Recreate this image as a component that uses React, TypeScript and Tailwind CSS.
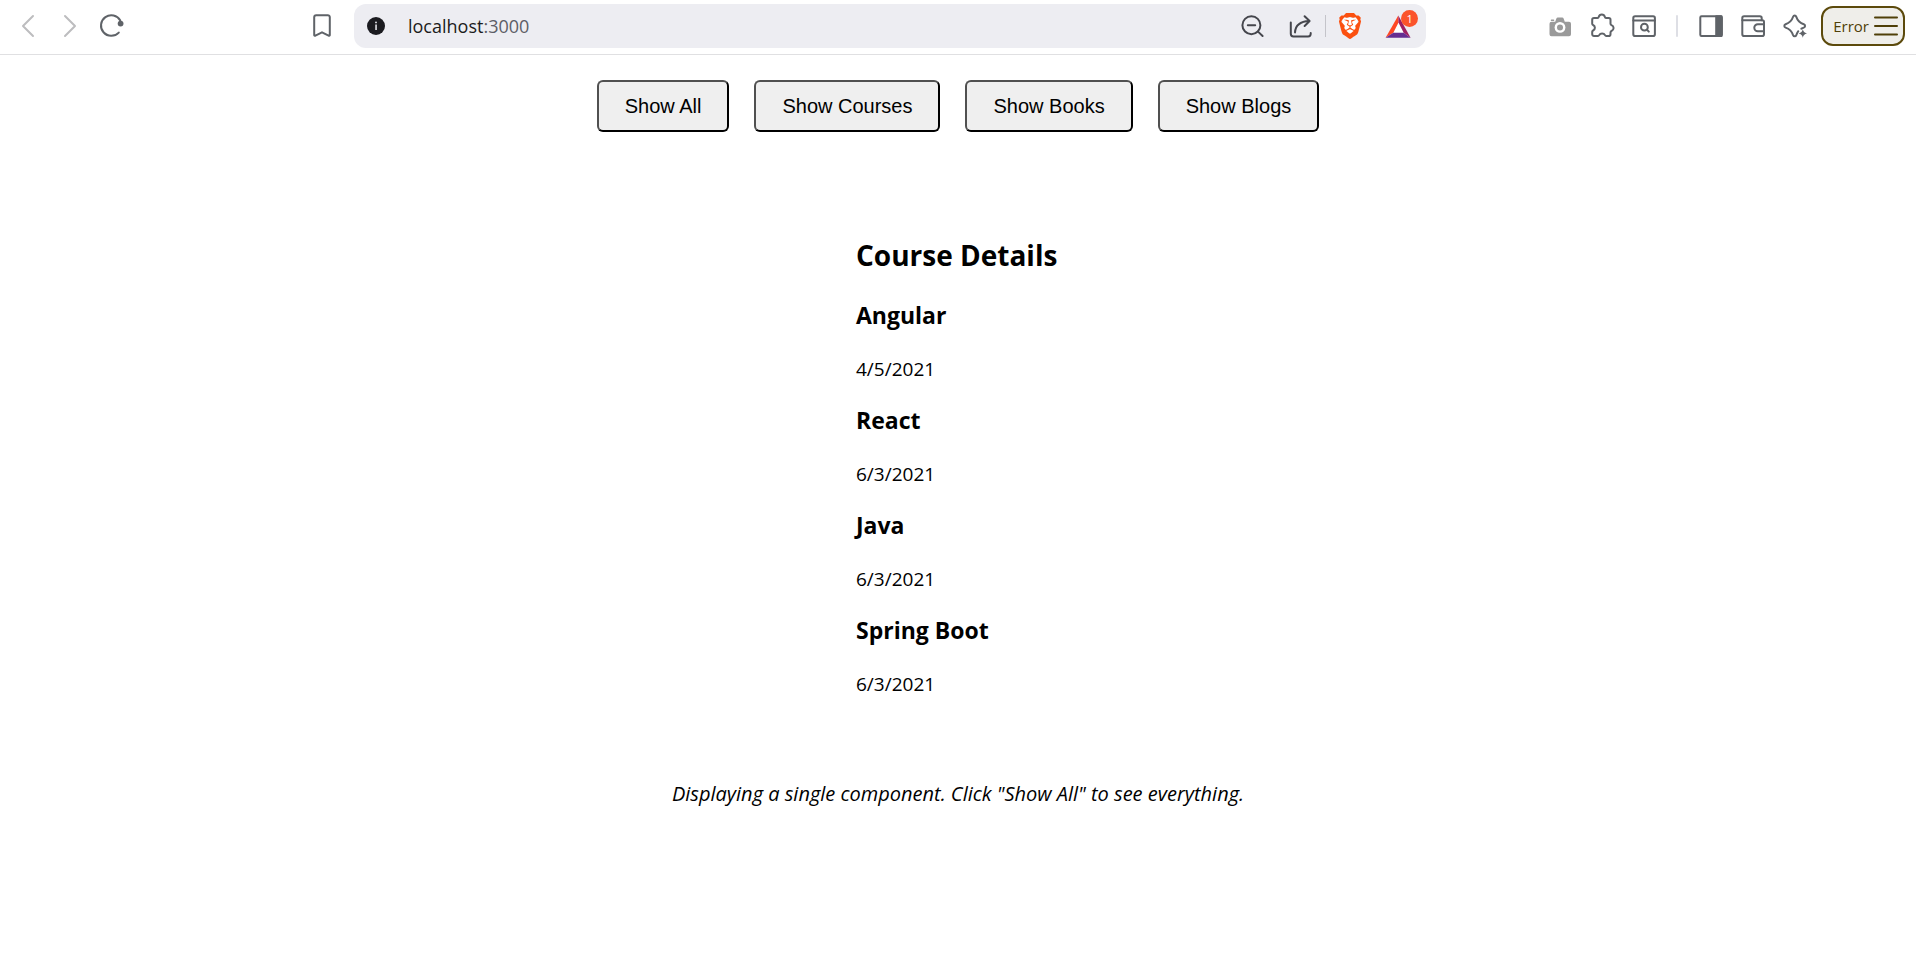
import { useState, type ReactNode } from "react";
import { SiBrave } from "react-icons/si";

const courses = [
  { name: "Angular", date: "4/5/2021" },
  { name: "React", date: "6/3/2021" },
  { name: "Java", date: "6/3/2021" },
  { name: "Spring Boot", date: "6/3/2021" },
];

const views = ["Show All", "Show Courses", "Show Books", "Show Blogs"];

function Glyph({ children, width = 2 }: { children: ReactNode; width?: number }) {
  return (
    <svg
      className="h-[26px] w-[26px] shrink-0"
      viewBox="0 0 26 26"
      fill="none"
      stroke="currentColor"
      strokeWidth={width}
      strokeLinecap="round"
      strokeLinejoin="round"
      aria-hidden="true"
    >
      {children}
    </svg>
  );
}

function ToolButton({ label, children }: { label: string; children: ReactNode }) {
  return (
    <button type="button" aria-label={label} className="flex h-11 w-[42px] shrink-0 items-center justify-center">
      {children}
    </button>
  );
}

function BarButton({ label, children }: { label: string; children: ReactNode }) {
  return (
    <button type="button" aria-label={label} className="relative flex h-11 w-12 shrink-0 items-center justify-center">
      {children}
    </button>
  );
}

function AddressBar() {
  return (
    <div className="ml-[11px] flex h-11 min-w-0 flex-1 items-center rounded-xl bg-[#ededf2] pr-1 pl-[13px] text-[#45464d]">
      <button type="button" aria-label="Site information" className="shrink-0">
        <svg className="h-[18px] w-[18px]" viewBox="0 0 18 18" aria-hidden="true">
          <circle cx="9" cy="9" r="9" fill="#1b1b20" />
          <rect x="8.3" y="7.5" width="1.5" height="5.5" fill="#ededf2" />
          <circle cx="9" cy="5.4" r="0.9" fill="#ededf2" />
        </svg>
      </button>
      <a href="http://localhost:3000" className="ml-[23px] flex-1 truncate text-lg text-[#1b1b20]">
        localhost<span className="text-[#5d5e66]">:3000</span>
      </a>
      <BarButton label="Zoom out">
        <Glyph>
          <circle cx="11.4" cy="12.2" r="9" />
          <path d="M18 18.6 22.6 23M7.8 12.2h7.4" />
        </Glyph>
      </BarButton>
      <BarButton label="Share">
        <Glyph>
          <path d="M2.8 9.6v11.2a2.6 2.6 0 0 0 2.6 2.6h14.7a2.6 2.6 0 0 0 2.6-2.6v-.7" />
          <path d="M7 19.4C7.4 12.600 11.800 8.400 21.400 8M16.600 3.200l5 4.800-5 5" />
        </Glyph>
      </BarButton>
      <span className="h-[22px] w-px bg-[#c4c4ca]" />
      <BarButton label="Shields">
        <span className="relative flex h-[26px] w-[26px] items-center justify-center">
          <svg className="absolute inset-0 h-[26px] w-[26px]" viewBox="0 0 26 26" aria-hidden="true">
            <path d="M6 5h14l1 7-3 8-5 4-5-4-3-8z" fill="#fff" />
          </svg>
          <SiBrave className="relative h-[26px] w-[26px] text-[#fb5010]" />
        </span>
      </BarButton>
      <BarButton label="Rewards">
        <svg className="h-[26px] w-[26px]" viewBox="0 0 26 26" aria-hidden="true">
          <path d="M8.300 19.800h10.400L13.500 9.500z" fill="#fff" />
          <path d="M13.300 2.500 .6 24.700l7.700-4.900L13.500 9.500z" fill="#ff4724" />
          <path d="M.6 24.700h25l-6.900-4.900H8.300z" fill="#662d91" />
          <path d="M13.300 2.500 25.600 24.700l-6.900-4.900-5.200-10.300z" fill="#9e1f63" />
        </svg>
        <span className="absolute top-[6px] right-1 flex h-[17px] w-[17px] items-center justify-center rounded-full bg-[#fb542b] text-[11px] leading-none text-white">
          1
        </span>
      </BarButton>
    </div>
  );
}

function BrowserBar() {
  return (
    <header className="flex items-center border-b border-[#e0e0e2] pt-1 pr-[11px] pb-[6px] pl-[7px] text-[#5f6368]">
      <nav aria-label="History" className="flex text-[#bdbdbf]">
        <ToolButton label="Back">
          <Glyph>
            <path d="M18 3 8 13l10 10" />
          </Glyph>
        </ToolButton>
        <ToolButton label="Forward">
          <Glyph>
            <path d="m8 3 10 10L8 23" />
          </Glyph>
        </ToolButton>
        <span className="text-[#5f6368]">
          <ToolButton label="Reload">
            <Glyph>
              <path d="M19.800 19.600A10.300 10.300 0 1 1 21.300 7.500" />
              <circle cx="21.600" cy="10.600" r="2.900" fill="currentColor" stroke="none" />
            </Glyph>
          </ToolButton>
        </span>
      </nav>
      <div className="ml-[168px]">
        <ToolButton label="Bookmark">
          <Glyph>
            <path d="M7.200 2.200h11.600a2 2 0 0 1 2 2v17.800a.8.8 0 0 1-1.200.7L13 19.300l-6.600 3.400a.8.8 0 0 1-1.200-.7V4.200a2 2 0 0 1 2-2z" />
          </Glyph>
        </ToolButton>
      </div>

      <AddressBar />

      <div className="ml-[113px] flex items-center">
        <ToolButton label="Capture">
          <svg className="h-[26px] w-[26px]" viewBox="0 0 26 26" aria-hidden="true">
            <path
              d="M4.500 8.800h3.700l1.200-3.200a1.500 1.500 0 0 1 1.400-1h4.400a1.500 1.500 0 0 1 1.400 1l1.200 3.200h4.200a2 2 0 0 1 2 2v10.400a2 2 0 0 1-2 2H4.500a2 2 0 0 1-2-2V10.800a2 2 0 0 1 2-2z"
              fill="#9a9a9a"
            />
            <rect x="3.800" y="6.400" width="3.400" height="1.600" rx=".6" fill="#9a9a9a" />
            <circle cx="13" cy="14.400" r="5.400" fill="#fff" />
            <circle cx="13" cy="14.400" r="3" fill="#9a9a9a" />
          </svg>
        </ToolButton>
        <ToolButton label="Extensions">
          <Glyph>
            <path d="M3.200 6.800a1.800 1.800 0 0 1 1.800-1.800h3.600c.8 0 1-.4 1.200-1.200.8-3.200 5.200-3.200 6 0 .2.800.4 1.200 1.200 1.200h2.700a1.800 1.800 0 0 1 1.800 1.800v4c0 .8.300 1 1 1.400 2.800 1.200 2.800 4.600 0 5.800-.7.300-1 .6-1 1.400v1.800a1.800 1.800 0 0 1-1.800 1.800h-2.500c-.6 0-.9-.3-1.200-.9-1.200-2.300-4.600-2.300-5.800 0-.3.600-.6.900-1.200.9H5a1.800 1.800 0 0 1-1.800-1.800v-2.400c0-.7.300-1 .9-1.300 2.400-1.200 2.400-4.400 0-5.500-.6-.3-.9-.7-.9-1.300z" />
          </Glyph>
        </ToolButton>
        <ToolButton label="Search tabs">
          <Glyph>
            <rect x="2.300" y="3.200" width="21.600" height="19.800" rx="1.800" />
            <path d="M2.300 7.400h21.600M16 16.800l1.800 1.800" />
            <circle cx="13.400" cy="14.200" r="3.400" />
          </Glyph>
        </ToolButton>
        <span className="mr-3 ml-[11px] h-[22px] w-[2px] rounded-full bg-[#dedfe5]" />
        <ToolButton label="Sidebar">
          <Glyph>
            <rect x="2.300" y="3.200" width="21.600" height="19.800" rx="1.200" />
            <path d="M18.200 3.200h5.200v19.800h-5.200z" fill="currentColor" />
          </Glyph>
        </ToolButton>
        <ToolButton label="Wallet">
          <Glyph>
            <path d="M2.300 7.200V5a1.800 1.800 0 0 1 1.800-1.800h15.800a1.800 1.800 0 0 1 1.800 1.800v2.200" />
            <path d="M2.300 7.200h19.900a1.800 1.800 0 0 1 1.800 1.800v12.200a1.800 1.800 0 0 1-1.800 1.800H4.100a1.800 1.800 0 0 1-1.800-1.800z" />
            <path d="M24 11.200h-6.200a3.500 3.500 0 0 0 0 7H24" />
          </Glyph>
        </ToolButton>
        <ToolButton label="Assistant">
          <Glyph>
            <path d="M16.300 18.200c-.8 1-1.400 2.300-2 3.900-.6 1.600-2.600 1.600-3.200 0-1.300-3.900-3.600-6.200-7.500-7.500-1.700-.6-1.700-2.700 0-3.300 3.900-1.300 6.200-3.600 7.500-7.500.6-1.700 2.600-1.700 3.200 0 1.300 3.900 3.600 6.200 7.500 7.500 1.700.6 1.700 2.700 0 3.300-.9.300-1.700.7-2.400 1.100" />
            <path d="M20.800 16.300c.6 2.500 1.500 3.500 4.200 4.200-2.700.7-3.600 1.700-4.200 4.200-.6-2.500-1.500-3.500-4.200-4.200 2.700-.7 3.600-1.700 4.200-4.200z" fill="currentColor" stroke="none" />
          </Glyph>
        </ToolButton>
        <button
          type="button"
          className="ml-[5px] flex h-10 shrink-0 items-center gap-1 rounded-xl border-2 border-[#5c4a0c] bg-[#efeeea] pr-1 pl-[10px] text-[15px] text-[#4f3f08]"
        >
          Error
          <Glyph>
            <path d="M2 4.500h22M2 13h22M2 21.500h22" />
          </Glyph>
        </button>
      </div>
    </header>
  );
}

export default function App() {
  const [, setView] = useState("Show Courses");

  return (
    <div className="min-h-screen bg-white font-['Open_Sans','Noto_Sans',sans-serif] text-black">
      <BrowserBar />
      <main className="flex flex-col items-center">
        <div className="mt-[25px] flex flex-wrap justify-center gap-[25px]">
          {views.map((view) => (
            <button
              key={view}
              type="button"
              onClick={() => setView(view)}
              className="h-[52px] rounded-md border-2 border-t-[#505050] border-r-black border-b-black border-l-[#505050] bg-[#efefef] px-[26px] font-['Liberation_Sans',Arial,sans-serif] text-xl"
            >
              {view}
            </button>
          ))}
        </div>
        <section className="mt-[103px] min-w-[204px]">
          <h2 className="text-[28px] leading-10 font-bold">Course Details</h2>
          <div className="mt-6 flex flex-col gap-[21px]">
            {courses.map((course) => (
              <article key={course.name}>
                <h3 className="text-[23px] leading-8 font-bold">{course.name}</h3>
                <p className="mt-6 text-[19px] leading-7">{course.date}</p>
              </article>
            ))}
          </div>
        </section>
        <p className="mt-[82px] text-xl leading-7 italic">
          Displaying a single component. Click "Show All" to see everything.
        </p>
      </main>
    </div>
  );
}
